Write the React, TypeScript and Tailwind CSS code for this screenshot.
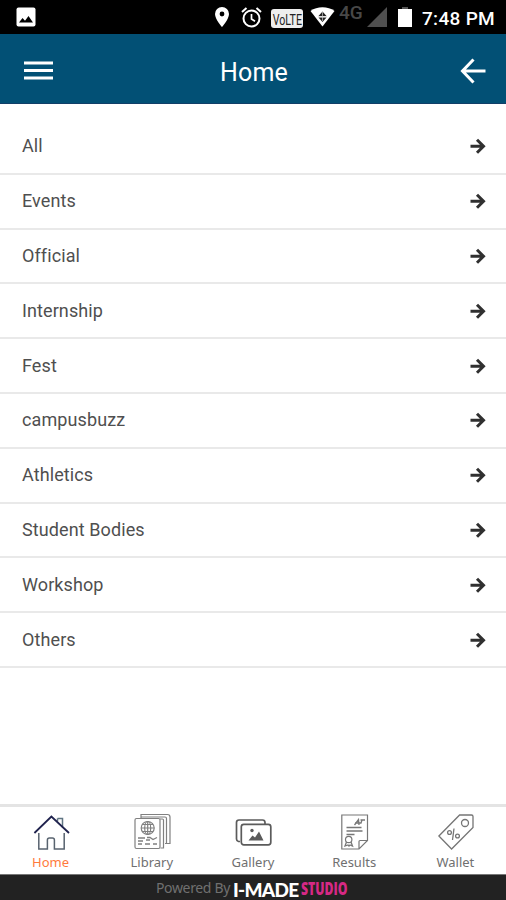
import React from "react";

const categories = [
  "All",
  "Events",
  "Official",
  "Internship",
  "Fest",
  "campusbuzz",
  "Athletics",
  "Student Bodies",
  "Workshop",
  "Others",
];

function StatusBar() {
  return (
    <div className="flex h-[34px] shrink-0 items-center bg-black pl-4 pr-[11px] text-white">
      <svg className="h-5 w-5" viewBox="0 0 20 20">
        <rect x="0.5" y="0.5" width="19" height="19" rx="2" fill="#fff" />
        <path d="M3 15.500l3.500-4.500 2.500 2.800 3.500-4.800 4.500 6.500z" fill="#000" />
      </svg>
      <svg className="ml-[179px] h-5 w-[14px]" viewBox="0 0 14 20">
        <path
          fillRule="evenodd"
          d="M7 0a7 7 0 0 0-7 7c0 5.200 7 13 7 13s7-7.800 7-13a7 7 0 0 0-7-7zm0 4.600a2.400 2.400 0 1 1 0 4.800 2.400 2.400 0 0 1 0-4.800z"
          fill="#fff"
        />
      </svg>
      <svg className="ml-3 h-[21px] w-[21px]" viewBox="0 0 21 21" fill="none" stroke="#fff">
        <circle cx="10.500" cy="11.500" r="8" strokeWidth="2" />
        <path d="M1 5l4.500-4M20 5l-4.500-4" strokeWidth="2" />
        <path d="M10.500 7v5l3.500 2.200" strokeWidth="1.700" />
      </svg>
      <div className="ml-[9px] mt-[3px] flex h-[19px] w-[32px] items-center justify-center rounded-[3px] bg-[#eee] text-[#222]">
        <span className="origin-center scale-x-[0.76] scale-y-110 font-['Roboto',sans-serif] text-[14px] leading-none">
          VoLTE
        </span>
      </div>
      <svg className="ml-[7px] h-5 w-[25px]" viewBox="0 0 25 20">
        <path d="M0.500 4C7-1 18-1 24.500 4L12.500 19.500z" fill="#fff" />
        <path d="M8.500 9l4-4.500 4 4.500zM8.500 10.500h8l-4 4.500z" fill="#222" />
        <path d="M8 9.700h9M12.500 4v10" stroke="#ccc" strokeWidth="0.700" />
      </svg>
      <span className="mb-[9px] ml-1 w-[25px] font-['Roboto',sans-serif] text-[19px] font-medium leading-none text-[#484848]">
        4G
      </span>
      <svg className="ml-[3px] h-5 w-5" viewBox="0 0 20 20">
        <path d="M20 0v20H0z" fill="#505050" />
      </svg>
      <svg className="ml-[11px] h-5 w-[14px]" viewBox="0 0 14 20">
        <path d="M0 2h14v18H0z" fill="#fff" />
        <path d="M4 0h6v2H4z" fill="#555" />
      </svg>
      <span className="ml-auto mt-0.5 whitespace-nowrap font-['Roboto',sans-serif] text-[19px] font-medium leading-none tracking-[0.3px]">
        7:48 PM
      </span>
    </div>
  );
}

function Header() {
  return (
    <header className="flex h-[70px] shrink-0 items-center justify-between border-b border-[#123f68] bg-[#025075] pl-6 pr-5">
      <svg className="mt-1 h-[19px] w-[29px]" viewBox="0 0 29 19" stroke="#fff" strokeWidth="3">
        <path d="M0 2h29M0 9.500h29M0 17h29" />
      </svg>
      <h1 className="mr-[5px] mt-[7px] font-['Roboto',sans-serif] text-[25px] font-normal leading-none tracking-[0.2px] text-white">
        Home
      </h1>
      <svg className="mt-1 h-[26px] w-[26px]" viewBox="0 0 26 26" fill="none" stroke="#fff" strokeWidth="3">
        <path d="M25.500 13H2.500M13.500 1.500L2.500 13L13.500 24.500" />
      </svg>
    </header>
  );
}

function ForwardArrow() {
  return (
    <svg className="h-4 w-4" viewBox="0 0 16 16" fill="none" stroke="#303030" strokeWidth="3">
      <path d="M0.500 8.300h13M7 1.800l6.500 6.500L7 14.800" />
    </svg>
  );
}

function HomeIcon() {
  return (
    <svg className="h-10 w-10" viewBox="0 0 40 40" fill="none">
      <path d="M26.500 6.500h5v9M26.500 6.500v3" stroke="#607583" strokeWidth="1.500" />
      <path d="M7.800 21v16h8.600V28q0-2 2-2h3q2 0 2 2v9h9.800V21" stroke="#58636f" strokeWidth="1.500" />
      <path d="M3.400 21L20.400 4.500L38 21" stroke="#20234e" strokeWidth="1.800" />
    </svg>
  );
}

function LibraryIcon() {
  return (
    <svg className="h-10 w-10" viewBox="0 0 40 40" fill="none" stroke="#808080" strokeWidth="1.200">
      <path d="M9 6V2.500h26.500q2.500 0 2.500 2.500v26.500h-5" />
      <path d="M9 5h24q1.500 0 1.500 1.500V31M28 7h2.500q1 0 1 1v28h-3" />
      <rect x="3" y="6.500" width="25" height="30" rx="1.500" />
      <circle cx="15.700" cy="16" r="6.500" />
      <ellipse cx="15.700" cy="16" rx="3" ry="6.500" />
      <path d="M9.200 16h13M10.500 12.500h10.500M10.500 19.500h10.500M15.700 9.500v13" />
      <path d="M6 26h7M15 25.500h3l3 2 4-2M6 29h5M14 28h4M6 32h4M13 32h5M21 32h4" strokeWidth="1.300" />
    </svg>
  );
}

function GalleryIcon() {
  return (
    <svg className="h-10 w-10" viewBox="0 0 40 40" fill="none" stroke="#5b5b5b" strokeWidth="1.700">
      <path d="M7 29.500H5.500Q3.500 29 3.500 27V10.500q0-2.500 2.500-2.500h23.500q2.500 0 2.500 2.500V12" />
      <rect x="8.300" y="12.300" width="29.500" height="20.500" rx="2.500" />
      <path d="M15.500 28.500l4-5 2.500 2 4-6 4.500 9z" fill="#5b5b5b" stroke="none" />
      <circle cx="19" cy="18.500" r="1.700" fill="#5b5b5b" stroke="none" />
    </svg>
  );
}

function ResultsIcon() {
  return (
    <svg className="h-10 w-10" viewBox="0 0 40 40" fill="none" stroke="#777" strokeWidth="1.200">
      <path d="M7.800 3h25.700v25.500L25 37H7.800zM25 37v-7.500q0-1 1-1h7.500" />
      <path d="M20.500 13l4-5.500.5 5.500M21 11h6l1-3M26.500 8h4.500" strokeWidth="1.300" />
      <path d="M12.500 15.500h15M12.500 19h16M12.500 22.500h8" strokeWidth="1.300" />
      <circle cx="14.700" cy="27.500" r="3.200" />
      <path d="M12.500 30l-1.500 4 3-1 1 1 1-1 2.500 1-1.500-4" strokeWidth="1.300" />
    </svg>
  );
}

function WalletIcon() {
  return (
    <svg className="h-10 w-10" viewBox="0 0 40 40" fill="none" stroke="#757575" strokeWidth="1.300">
      <path d="M3.900 24L24.600 3H36.500q1.500 0 1.500 1.500V15.500L16.600 37z" />
      <circle cx="30" cy="11" r="3.500" />
      <circle cx="14.500" cy="20.500" r="1.900" />
      <circle cx="22.500" cy="24" r="1.900" />
      <path d="M19 16.500l-1.500 11.500" />
    </svg>
  );
}

const tabs = [
  { label: "Home", Icon: HomeIcon, color: "text-[#ff7a3c]" },
  { label: "Library", Icon: LibraryIcon, color: "text-[#707070]" },
  { label: "Gallery", Icon: GalleryIcon, color: "text-[#707070]" },
  { label: "Results", Icon: ResultsIcon, color: "text-[#707070]" },
  { label: "Wallet", Icon: WalletIcon, color: "text-[#707070]" },
];

export default function App() {
  return (
    <div className="flex h-[900px] w-[506px] flex-col overflow-hidden bg-white">
      <StatusBar />
      <Header />
      <main className="grow pt-[16px]">
        {categories.map((name) => (
          <div
            key={name}
            className="flex h-[54.8px] items-center justify-between border-b-2 border-[#e9e9e9] pl-[22px] pr-5"
          >
            <span className="font-['Roboto',sans-serif] text-[18px] leading-none tracking-[0.1px] text-[#4f4f4f]">
              {name}
            </span>
            <ForwardArrow />
          </div>
        ))}
      </main>
      <nav className="grid h-[71px] shrink-0 grid-cols-5 border-b border-t-[3px] border-b-[#777] border-t-[#e4e4e4]">
        {tabs.map(({ label, Icon, color }) => (
          <div key={label} className={`flex flex-col items-center pt-[5px] ${color}`}>
            <Icon />
            <span className="mt-1 font-['Noto_Sans',sans-serif] text-[13px] leading-none">{label}</span>
          </div>
        ))}
      </nav>
      <footer className="flex h-[25px] shrink-0 items-center bg-[#222] pl-[156px] leading-none">
        <span className="w-[77px] whitespace-nowrap font-['Noto_Sans',sans-serif] text-[14px] tracking-[-0.35px] text-[#707070]">
          Powered By
        </span>
        <span className="mt-[3px] w-[68px] whitespace-nowrap font-['Lato',sans-serif] text-[19px] font-black tracking-[-0.7px] text-white">
          I-MADE
        </span>
        <span className="mt-px origin-left scale-x-[0.68] whitespace-nowrap font-['Open_Sans',sans-serif] text-[18px] font-extrabold text-[#d62985]">
          STUDIO
        </span>
      </footer>
    </div>
  );
}
